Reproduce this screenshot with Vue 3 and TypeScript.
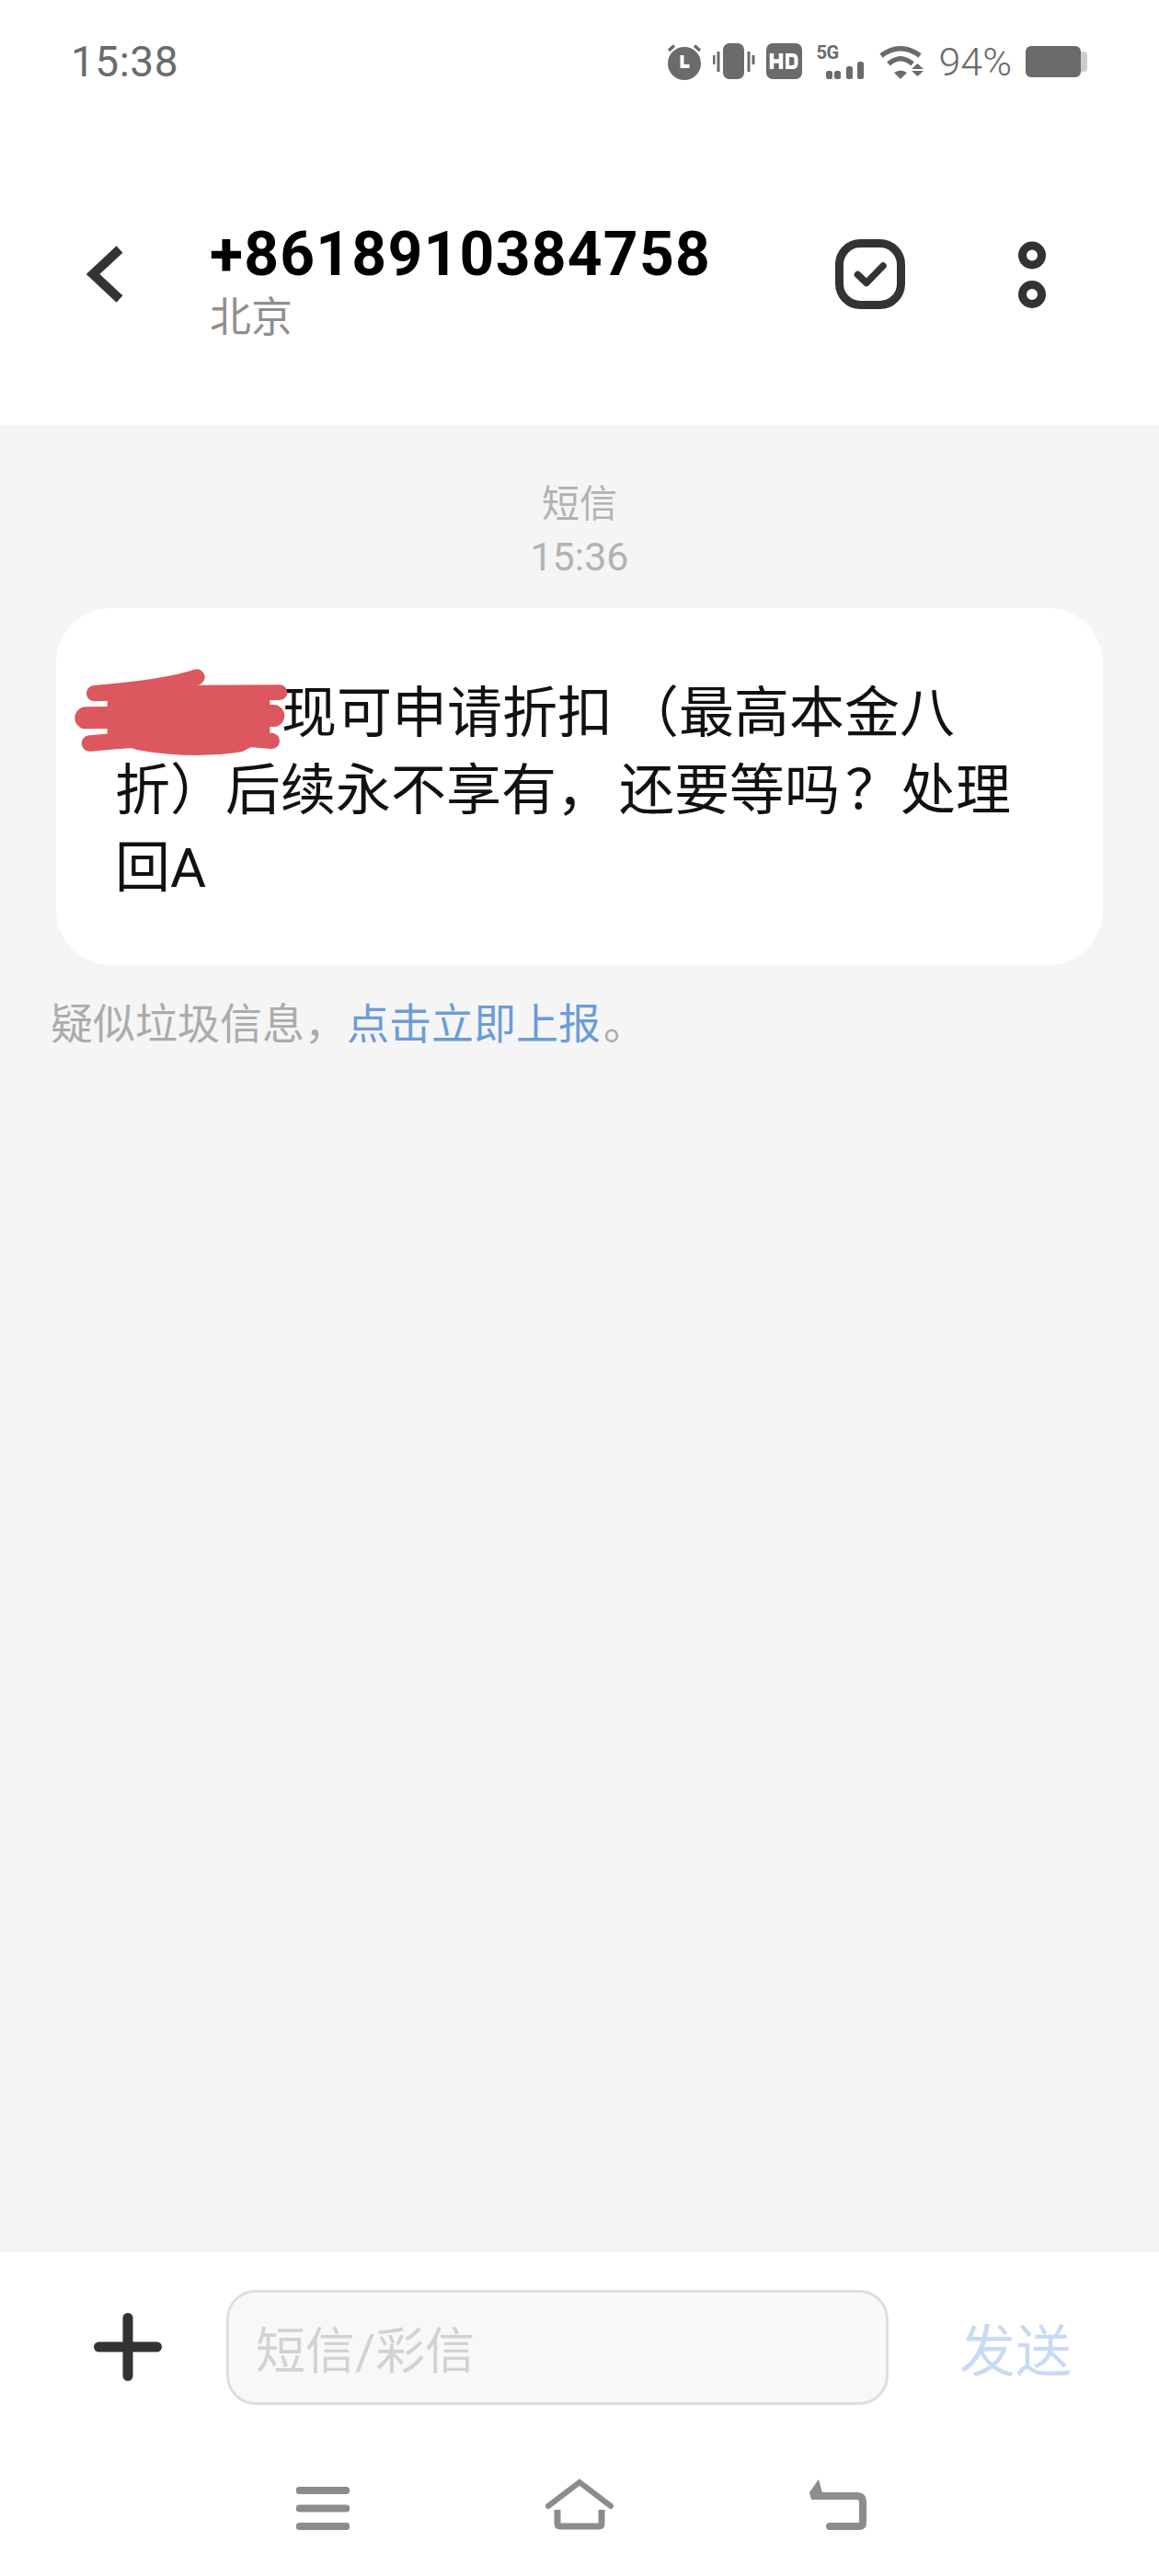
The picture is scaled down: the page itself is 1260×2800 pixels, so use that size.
<template>
  <div class="phone">
    <!-- status bar -->
    <div class="status-bar">
      <span class="clock">15:38</span>
      <div class="status-icons">
        <svg class="ic-alarm" width="40" height="40" viewBox="0 0 40 40">
          <circle cx="20" cy="22" r="18" fill="#6b6b6b" />
          <path d="M3 8 9 2.500M37 8 31 2.500" stroke="#6b6b6b" stroke-width="3.500" fill="none" />
          <path d="M17.500 13v12h8" stroke="#fff" stroke-width="4" fill="none" />
        </svg>
        <svg class="ic-vibrate" width="46" height="40" viewBox="0 0 46 40">
          <rect x="11" y="0" width="23" height="39" rx="7" fill="#6b6b6b" />
          <path d="M6 11v22M1 15v10M39 11v22M44 15v10" transform="translate(0 -2)" stroke="#6b6b6b" stroke-width="3" fill="none" />
        </svg>
        <svg class="ic-hd" width="39" height="40" viewBox="0 0 39 40">
          <rect width="39" height="39" rx="7" fill="#6b6b6b" />
          <path d="M6 11v17M16 11v17M6 19.500h10" stroke="#fff" stroke-width="4.500" fill="none" />
          <path d="M23 13h5.500q4 0 4 4v5q0 4-4 4H23z" stroke="#fff" stroke-width="4" fill="none" />
        </svg>
        <div class="signal">
          <span class="fiveg">5G</span>
          <svg width="41" height="19" viewBox="0 0 41 19">
            <rect x="0" y="10" width="7" height="9" rx="2.500" fill="#6b6b6b" />
            <rect x="9" y="10" width="7" height="9" rx="2.500" fill="#6b6b6b" />
            <rect x="22" y="5" width="7" height="14" rx="2.500" fill="#6b6b6b" />
            <rect x="34" y="0" width="7" height="19" rx="2.500" fill="#6b6b6b" />
          </svg>
        </div>
        <svg class="ic-wifi" width="48" height="38" viewBox="0 0 48 38">
          <path d="M2 12.500Q23-3 44 12.500" stroke="#6b6b6b" stroke-width="5.500" fill="none" />
          <path d="M10 21.500Q23 10 36 21.500" stroke="#6b6b6b" stroke-width="5.500" fill="none" />
          <path d="M16 31 23 38 30 31Q23 26 16 31z" fill="#6b6b6b" />
          <path d="M35 27h13l-6.500-6zM35 29h13l-6.500 6z" fill="#6b6b6b" />
        </svg>
        <span class="battery-pct">94%</span>
        <div class="battery">
          <div class="battery-body"></div>
          <div class="battery-cap"></div>
        </div>
      </div>
    </div>

    <!-- header -->
    <header class="header">
      <svg class="back" width="40" height="62" viewBox="0 0 40 62">
        <path d="M36 4 7 31l29 27" stroke="#333" stroke-width="10" fill="none" />
      </svg>
      <div class="contact">
        <div class="number">{{ contact.number }}</div>
        <div class="region">{{ contact.region }}</div>
      </div>
      <svg class="select" width="76" height="76" viewBox="0 0 76 76">
        <rect x="4.500" y="4.500" width="67" height="67" rx="23" stroke="#333" stroke-width="9" fill="none" />
        <path d="M24.500 38.500 34 47.500 52 29" stroke="#333" stroke-width="7.500" stroke-linecap="round" stroke-linejoin="round" fill="none" />
      </svg>
      <svg class="more" width="30" height="73" viewBox="0 0 30 73">
        <circle cx="15" cy="15.500" r="10.500" stroke="#333" stroke-width="9" fill="none" />
        <circle cx="15" cy="58" r="10.500" stroke="#333" stroke-width="9" fill="none" />
      </svg>
    </header>

    <!-- conversation -->
    <main class="thread">
      <div class="thread-meta">
        <div>短信</div>
        <div class="thread-time">15:36</div>
      </div>
      <div class="bubble">
        <div class="line">
          <span class="redact">
            <svg width="300" height="130" viewBox="0 0 900 390">
              <g stroke="#dc585e" stroke-linecap="round" fill="none">
                <path d="M128 155C250 145 380 130 462 102" stroke-width="52" />
                <path d="M128 155 732 152" stroke-width="50" />
                <path d="M100 235 712 228" stroke-width="72" />
                <path d="M112 318C300 300 500 290 706 310" stroke-width="52" />
              </g>
              <path d="M170 150H700V300L610 345Q450 372 270 340L170 310z" fill="#dc585e" />
            </svg>
          </span>
          <span>现可申请折扣<span class="paren">（</span>最高本金八</span>
        </div>
        <div class="line">折）后续永不享有<span class="comma">，</span>还要等吗<span class="ques">？</span>处理</div>
        <div class="line">回A</div>
      </div>
      <p class="spam-note">疑似垃圾信息，<span class="report-link">点击立即上报</span><span class="stop">。</span></p>
    </main>

    <!-- composer -->
    <div class="composer">
      <svg class="plus" width="74" height="74" viewBox="0 0 74 74">
        <path d="M5.500 37h63M37 5.500v63" stroke="#333" stroke-width="11" stroke-linecap="round" fill="none" />
      </svg>
      <div class="input-box">短信/彩信</div>
      <span class="send">发送</span>
    </div>

    <!-- nav bar -->
    <nav class="nav-bar">
      <svg width="58" height="47" viewBox="0 0 58 47">
        <path d="M3.500 4h51M3.500 23.500h51M3.500 43h51" stroke="#8c8c8c" stroke-width="8" stroke-linecap="round" fill="none" />
      </svg>
      <svg width="74" height="56" viewBox="0 0 74 56">
        <path d="M3 30 37 4l34 26" stroke="#8c8c8c" stroke-width="6" stroke-linecap="round" stroke-linejoin="miter" fill="none" />
        <path d="M13 34v15q0 3 3 3h42q3 0 3-3V34" stroke="#8c8c8c" stroke-width="7" fill="none" />
      </svg>
      <svg width="62" height="56" viewBox="0 0 62 56">
        <path d="M10 19h41q7 0 7 7v22q0 4-4 4H22" stroke="#8c8c8c" stroke-width="8" stroke-linecap="round" fill="none" />
        <path d="M10 1 0 15l2 8h14z" fill="#8c8c8c" />
      </svg>
    </nav>
  </div>
</template>

<script setup lang="ts">
interface Contact {
  number: string
  region: string
}

const contact: Contact = {
  number: '+8618910384758',
  region: '北京'
}
</script>

<style>
html, body {
  margin: 0;
  background: #fff;
}
</style>

<style scoped>
.phone {
  width: 1260px;
  height: 2800px;
  display: flex;
  flex-direction: column;
  background: #fff;
  font-family: Roboto, "Noto Sans CJK SC", sans-serif;
}

/* Status bar */
.status-bar {
  height: 134px;
  flex-shrink: 0;
  display: flex;
  align-items: center;
  justify-content: space-between;
  padding: 0 78px 0 77px;
  color: #6b6b6b;
}

.clock {
  font-size: 46px;
  letter-spacing: 0.5px;
}

.status-icons {
  display: flex;
  align-items: center;
}

.ic-vibrate { margin-left: 11px; }
.ic-hd { margin-left: 12px; }

.signal {
  margin-left: 16px;
  width: 51px;
  height: 37px;
  position: relative;
}

.signal svg {
  position: absolute;
  right: 0;
  bottom: 0;
}

.fiveg {
  position: absolute;
  left: 0;
  top: -2px;
  font-size: 20px;
  line-height: 1;
  font-weight: 700;
  letter-spacing: -0.5px;
}

.ic-wifi { margin-left: 17px; }

.battery-pct {
  margin-left: 17px;
  font-size: 43px;
  font-weight: 300;
}

.battery {
  margin-left: 15px;
  display: flex;
  align-items: center;
}

.battery-body {
  width: 60px;
  height: 34px;
  border-radius: 6px;
  background: #6b6b6b;
}

.battery-cap {
  width: 7px;
  height: 22px;
  border-radius: 0 4px 4px 0;
  background: #ccc;
}

/* Header */
.header {
  height: 328px;
  flex-shrink: 0;
  display: flex;
  align-items: center;
  padding: 0 123px 0 94px;
}

.back { flex-shrink: 0; }

.contact {
  flex: 1;
  margin: 16px 0 0 94px;
}

.number {
  font-size: 66px;
  line-height: 72px;
  font-weight: 700;
  color: #000;
  letter-spacing: 1.2px;
}

.region {
  margin-top: 8px;
  font-size: 45px;
  line-height: 50px;
  color: #8f8f8f;
}

.select { margin-right: 123px; }

/* Thread */
.thread {
  flex: 1;
  background: #f5f5f5;
  padding: 58px 61px 0;
}

.thread-meta {
  text-align: center;
  font-size: 41px;
  line-height: 57px;
  color: #b2b2b2;
}

.thread-time { font-size: 43px; }

.bubble {
  margin-top: 27px;
  height: 388px;
  box-sizing: border-box;
  padding: 73px 64px 0;
  background: #fff;
  border-radius: 60px;
  font-size: 60px;
  line-height: 84px;
  color: #111;
}

.line {
  display: flex;
  height: 84px;
  white-space: nowrap;
}

.redact {
  position: relative;
  flex: 0 0 181px;
}

.redact svg {
  position: absolute;
  left: -65px;
  top: -32px;
}

.paren { margin-left: 12px; }
.comma { margin-right: 8px; }
.ques { margin-left: 6px; }
.stop { margin-left: 3px; }

.spam-note {
  margin: 36px 0 0 -6px;
  font-size: 46px;
  line-height: 56px;
  color: #ababab;
}

.report-link { color: #6b9cd9; }

/* Composer */
.composer {
  height: 212px;
  flex-shrink: 0;
  box-sizing: border-box;
  display: flex;
  align-items: center;
  padding: 0 94px 6px 102px;
}

.input-box {
  margin-left: 70px;
  width: 720px;
  height: 125px;
  box-sizing: border-box;
  display: flex;
  align-items: center;
  padding-left: 29px;
  border: 3.5px solid #dedede;
  border-radius: 32px;
  background: #f8f8f8;
  font-size: 54px;
  color: #d2d2d2;
}

.send {
  margin-left: 77px;
  font-size: 61px;
  color: #c9daf3;
}

/* Nav bar */
.nav-bar {
  height: 140px;
  box-sizing: border-box;
  flex-shrink: 0;
  display: flex;
  align-items: flex-end;
  padding: 0 318px 50px 322px;
  justify-content: space-between;
}
</style>
